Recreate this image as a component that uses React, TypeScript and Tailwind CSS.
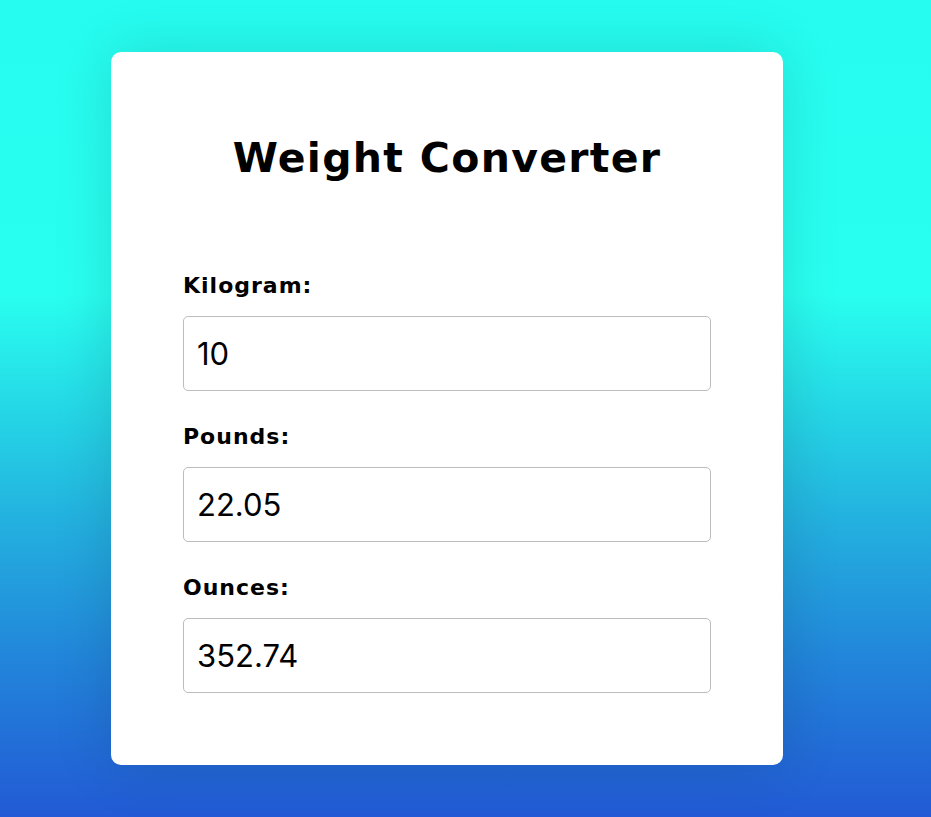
import { useState } from 'react'

const fields = [
  { id: 'kg', label: 'Kilogram:' },
  { id: 'lb', label: 'Pounds:' },
  { id: 'oz', label: 'Ounces:' },
] as const

type Unit = (typeof fields)[number]['id']

// how many kilograms in one unit
const toKg: Record<Unit, number> = { kg: 1, lb: 0.45359237, oz: 0.028349523125 }

function fmt(n: number) {
  return String(Math.round(n * 100) / 100)
}

export default function App() {
  const [values, setValues] = useState<Record<Unit, string>>({ kg: '10', lb: '22.05', oz: '352.74' })

  function update(unit: Unit, raw: string) {
    const n = parseFloat(raw)
    if (isNaN(n)) {
      setValues({ kg: '', lb: '', oz: '', [unit]: raw } as Record<Unit, string>)
      return
    }
    const kg = n * toKg[unit]
    const next = {} as Record<Unit, string>
    for (const f of fields) next[f.id] = f.id === unit ? raw : fmt(kg / toKg[f.id])
    setValues(next)
  }

  return (
    <main
      className="min-h-screen flex items-center pl-[111px] font-['Inter',sans-serif]"
      style={{
        background:
          'linear-gradient(to bottom, #26fcf0 0%, #29fff0 36%, #25d8e6 50%, #23b0df 64%, #2282da 82%, #225ad5 100%)',
      }}
    >
      <div className="w-[672px] bg-white rounded-[10px] px-[72px] pt-[86px] pb-[72px] shadow-[0_0_60px_rgba(0,0,0,0.14)]">
        {/* Title */}
        <h1 className="text-center text-[41px] leading-[41px] font-bold text-black tracking-[1.3px] font-['DejaVu_Sans',sans-serif] mb-[96px]">
          Weight Converter
        </h1>

        {/* Fields */}
        <div className="flex flex-col gap-[35px]">
          {fields.map((f) => (
            <div key={f.id}>
              <label
                htmlFor={f.id}
                className="block text-[22px] leading-[21px] font-bold text-black tracking-[1px] font-['DejaVu_Sans',sans-serif] mb-5"
              >
                {f.label}
              </label>
              <input
                id={f.id}
                type="number"
                value={values[f.id]}
                onChange={(e) => update(f.id, e.target.value)}
                className="block w-full h-[75px] px-[13px] border border-[#bdbdbd] rounded-[5px] text-[31px] text-black outline-none [appearance:textfield] [&::-webkit-inner-spin-button]:appearance-none"
              />
            </div>
          ))}
        </div>
      </div>
    </main>
  )
}
